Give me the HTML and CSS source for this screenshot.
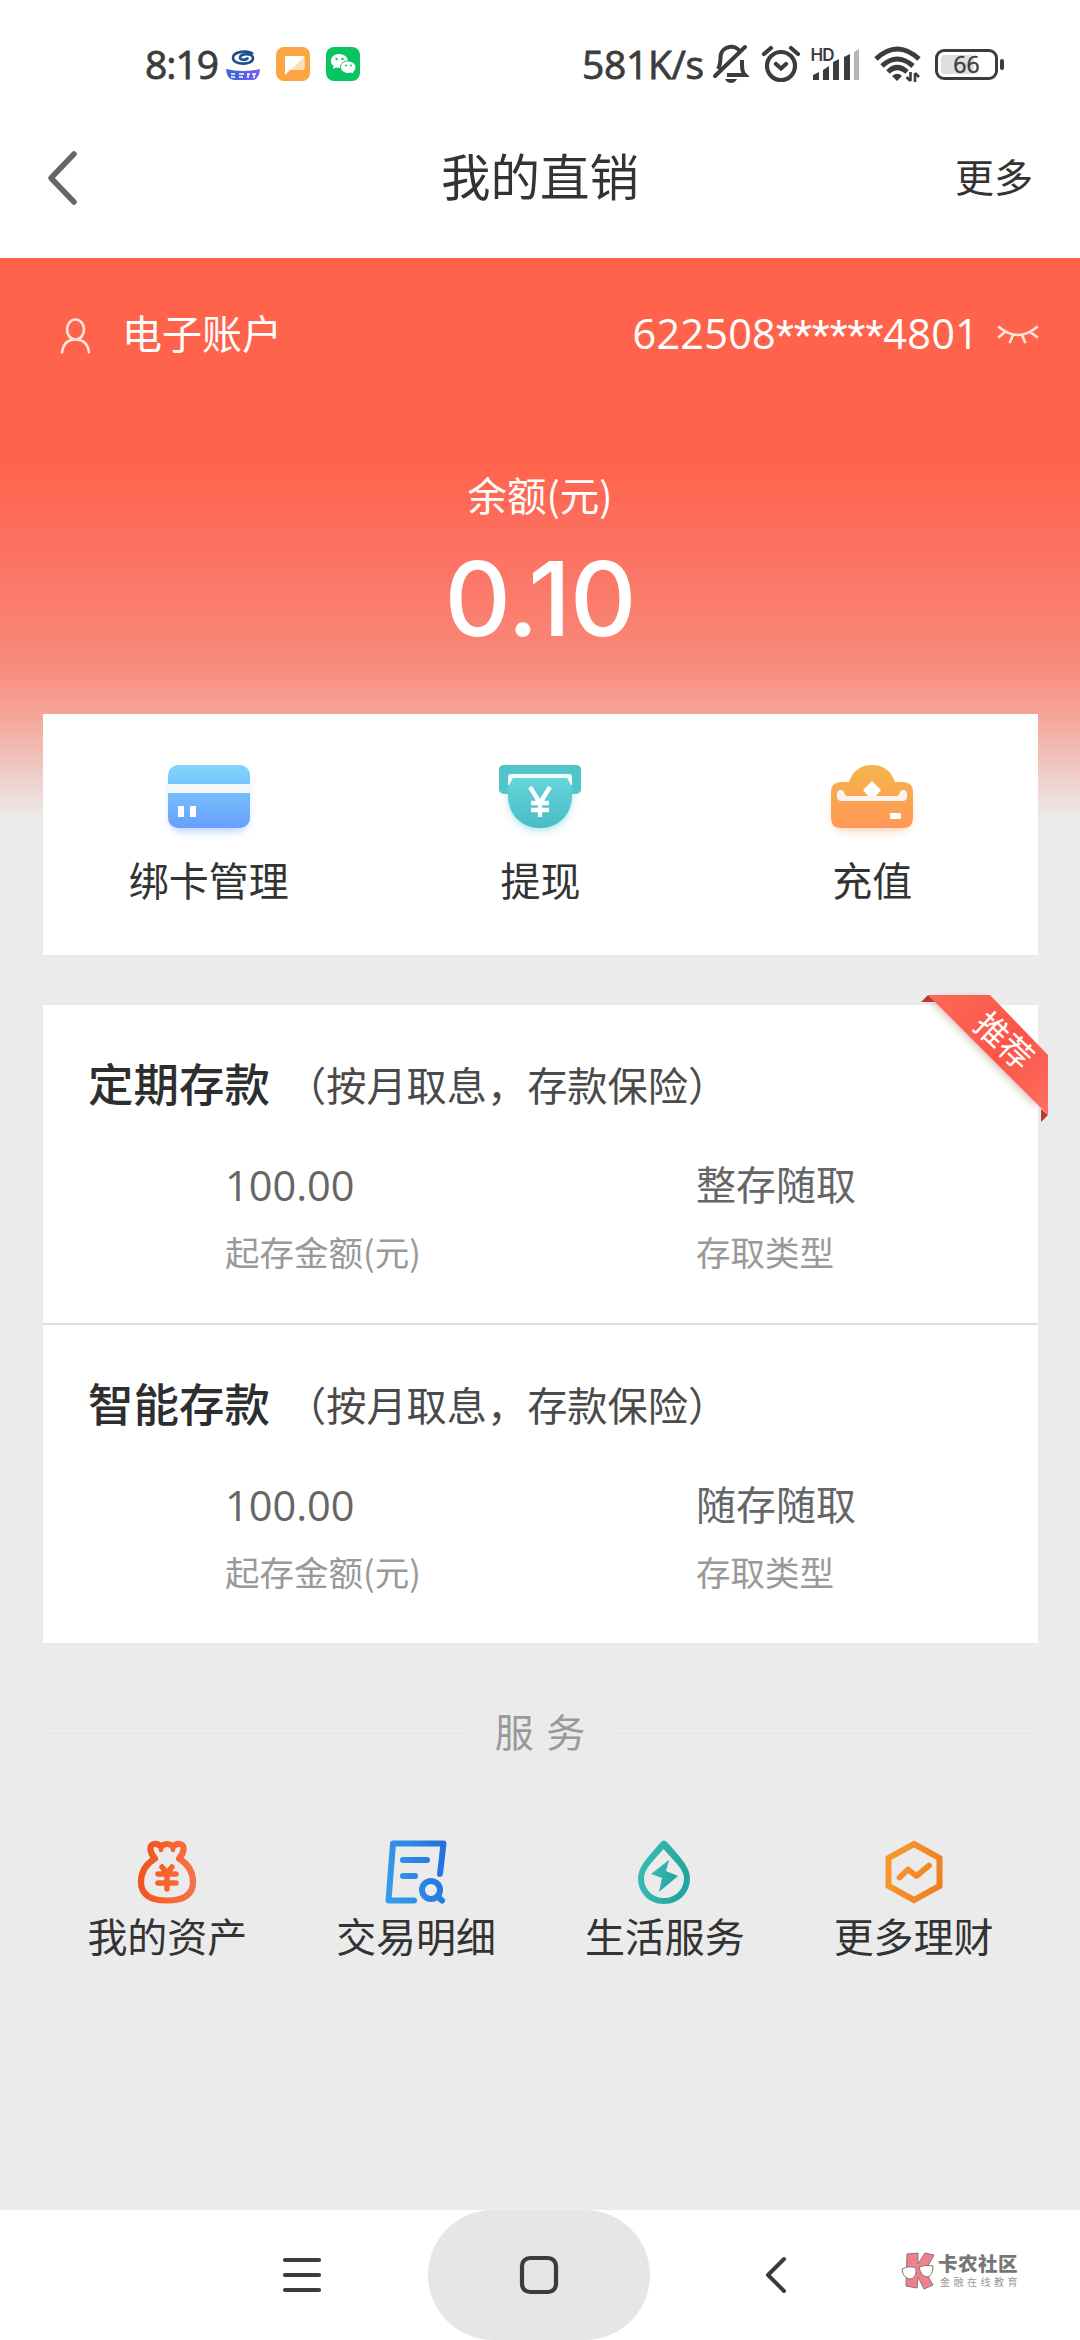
FILE: index.html
```html
<!DOCTYPE html>
<html lang="zh-CN">
<head>
<meta charset="utf-8">
<title>我的直销</title>
<link rel="stylesheet" href="styles.css">
</head>
<body>
<div class="statusbar">
  <span class="clock">8:19</span>
  <svg class="app-bank" width="34" height="34" viewBox="0 0 34 34">
    <defs><linearGradient id="gb"><stop offset="0" stop-color="#3568d8"/><stop offset="1" stop-color="#7a5cf0"/></linearGradient></defs>
    <path d="M27 7C22 3 7 4 7 11c0 7 20 8 20 0 0-5-13-5-13-.5 0 3 7 3 8 0" fill="none" stroke="#1d4f90" stroke-width="2.6"/>
    <path d="M0 22q17 4 34 0-1 11-8 11H8Q1 33 0 22Z" fill="url(#gb)"/>
    <path d="M5 27h4m-4 3h4M13 27h5m-5 3h4M21 27h3m-2 0v4M26 27h4m-2 0v4" stroke="#fff" stroke-width="1.5"/>
  </svg>
  <svg class="app-note" width="34" height="34" viewBox="0 0 34 34">
    <rect width="34" height="34" rx="8" fill="#fba642"/>
    <path d="M10 9h17a1.500 1.500 0 0 1 1.500 1.500V21a2 2 0 0 1-2 2H14l-5 5V10Z" fill="#fff"/>
    <path d="M28 10 15 23h12a1.500 1.500 0 0 0 1.500-1.500Z" fill="#fde0b8"/>
  </svg>
  <svg class="app-wechat" width="34" height="34" viewBox="0 0 34 34">
    <rect width="34" height="34" rx="8" fill="#0ac45f"/>
    <path d="M13 7c5 0 9 3 9 7s-4 7-9 7l-3-.5L7 22l.7-3C5.500 18 5 16 5 14c0-4 3-7 8-7Z" fill="#fff"/>
    <path d="M22 14c4 0 8 3 8 6 0 2-1 4-2.500 5l.5 2-3-1-3 .5c-4 0-7.500-3-7.500-6.500s3.500-6 7.500-6Z" fill="#fff" stroke="#0ac45f"/>
    <g fill="#0ac45f"><circle cx="10.500" cy="12" r="1.200"/><circle cx="16.500" cy="12" r="1.200"/><circle cx="20" cy="18.500" r="1"/><circle cx="25" cy="18.500" r="1"/></g>
  </svg>
  <span class="speed">581K/s</span>
  <svg class="bell" width="36" height="40" viewBox="0 0 36 40" fill="none" stroke="#3c3c3c" stroke-width="4">
    <path d="M5 25c2.500-4 2.500-8 2.500-12C8 1 24 0 27 8M14 31h18c-3-3-3-6-3-15"/>
    <path d="M2 32 32 3" stroke-linecap="round"/><path d="M12 35h12q-2 4-6 4t-6-4Z" fill="#3c3c3c" stroke="none"/>
  </svg>
  <svg class="alarm" width="40" height="38" viewBox="0 0 40 38" fill="none" stroke="#3c3c3c" stroke-width="4.200" stroke-linecap="round">
    <circle cx="20" cy="21" r="14"/><path d="m3 9 7-6M37 9l-7-6M15 19l5 4.500 5-4.500"/>
  </svg>
  <svg class="signal" width="50" height="36" viewBox="0 0 50 36" fill="#3c3c3c">
    <text class="hd" x="-.5" y="14.500" textLength="24">HD</text>
    <path d="M2 34v-5l6-3v8ZM12 34V24l6-4v14ZM22 34V16l6-3v21ZM33 34V11l6-3v26Z"/><path d="M43 34V6l5-3v31Z" fill="#b4b4b4"/>
  </svg>
  <svg class="wifi" width="48" height="38" viewBox="0 0 48 38" fill="none" stroke="#3c3c3c" stroke-width="5">
    <path d="M2 14Q23-6 45 14M8 21q15-14 31 0M14 27q9-9 19 0"/>
    <path d="m18 31q5.500-4.500 10 0l-5 5Z" fill="#3c3c3c" stroke="none"/>
    <path d="M36.500 27v9m-4-4 4 4M41 37v-9m4 4-4-4" stroke-width="2.600"/>
  </svg>
  <div class="battery"><span class="level"></span><span class="pct">66</span></div>
  <span class="battery-cap"></span>
</div>

<header class="topbar">
  <svg class="back" width="30" height="54" viewBox="0 0 30 54"><path d="M27 3 4 27l23 24" fill="none" stroke="#666" stroke-width="5.500" stroke-linecap="round" stroke-linejoin="round"/></svg>
  <h1 class="title">我的直销</h1>
  <a class="more">更多</a>
</header>

<main class="page">
  <section class="hero">
    <div class="account">
      <svg class="user" width="32" height="36" viewBox="0 0 32 36" fill="none" stroke="#ffe3dd" stroke-width="2.600" stroke-linecap="round">
        <ellipse cx="15.500" cy="11.500" rx="8.500" ry="10"/><path d="M2 34.500C3 26 8 21.500 15.500 21.500S28 26 29 34.500"/>
      </svg>
      <span class="account-name">电子账户</span>
      <span class="account-no">622508<span class="stars">******</span>4801</span>
      <svg class="eye" width="42" height="20" viewBox="0 0 42 20" fill="none" stroke="#ffe3dd" stroke-width="2.600" stroke-linecap="round">
        <path d="M2 3q19 16 38 0M8 8l-6 5M16 11l-3 7M25 11l3 7M33 8l7 5"/>
      </svg>
    </div>
    <p class="balance-label">余额(元)</p>
    <p class="balance">0.10</p>
  </section>

  <section class="card actions">
    <div class="action">
      <svg class="action-icon" width="98" height="82" viewBox="0 0 98 82">
        <defs>
          <linearGradient id="g1" x2="0" y2="1"><stop offset="0" stop-color="#7fd6fb"/><stop offset="1" stop-color="#689ffc"/></linearGradient>
          <filter id="sh" x="-20%" y="-20%" width="140%" height="150%"><feGaussianBlur stdDeviation="4"/></filter>
        </defs>
        <rect x="11" y="20" width="76" height="54" rx="10" fill="#689ffc" opacity=".5" filter="url(#sh)"/>
        <rect x="8" y="8" width="82" height="63" rx="10" fill="url(#g1)"/>
        <path d="M8 27h82v9H8Z" fill="#f6f7fa"/><path d="M18 49h6v11h-6ZM30 49h6v11h-6Z" fill="#fff"/>
      </svg>
      <span class="action-name">绑卡管理</span>
    </div>
    <div class="action">
      <svg class="action-icon" width="98" height="82" viewBox="0 0 98 82">
        <defs><linearGradient id="g2" x2="0" y2="1"><stop offset="0" stop-color="#66d5dc"/><stop offset="1" stop-color="#49bcc3"/></linearGradient></defs>
        <path d="M17 30h64q0 43-32 43T17 30Z" fill="#49bcc3" opacity=".5" filter="url(#sh)"/>
        <path d="M13 8h72q5 0 5 5v19q0 5-6 5H14q-6 0-6-5V13q0-5 5-5Z" fill="#51c5c9"/>
        <path d="M20 17h58q3 0 3 3v8H17v-8q0-3 3-3Z" fill="#f2f8f8"/>
        <path d="M22 21h54l5 9v9c0 19-14 32-32 32S17 58 17 39v-9Z" fill="url(#g2)"/>
        <path d="m39 30 10 16 10-16M49 45v15M40 46h18M40 53h18" fill="none" stroke="#fff" stroke-width="4.400"/>
      </svg>
      <span class="action-name">提现</span>
    </div>
    <div class="action">
      <svg class="action-icon" width="98" height="82" viewBox="0 0 98 82">
        <defs><linearGradient id="g3" gradientUnits="userSpaceOnUse" x1="0" y1="8" x2="0" y2="71"><stop offset="0" stop-color="#f8b44c"/><stop offset="1" stop-color="#ff9858"/></linearGradient></defs>
        <rect x="11" y="34" width="76" height="40" rx="10" fill="#ff9858" opacity=".45" filter="url(#sh)"/>
        <path d="M18 25h8C30 14 37 8 49 8s19 6 23 17h8q10 0 10 10v26q0 10-10 10H18Q8 71 8 61V35q0-10 10-10Z" fill="url(#g3)"/>
        <path d="M18 33q-4 0-4 4v3q0 4 5 4h60q5 0 5-4v-3q0-4-4-4-3 0-4 5H22q-1-5-4-5Z" fill="#f7f4f2"/>
        <path d="M24 32h50q2 4 1 7H23q-1-3 1-7Z" fill="url(#g3)"/>
        <path d="m49 24 9 9-5 6h-8l-5-6ZM67 56h11v6H67Z" fill="#fff"/>
      </svg>
      <span class="action-name">充值</span>
    </div>
  </section>

  <section class="card products">
    <article class="product">
      <h2 class="product-head"><b class="product-name">定期存款</b><span class="product-note">（按月取息，存款保险）</span></h2>
      <div class="facts">
        <div class="fact fact-amount"><span class="value num">100.00</span><span class="key">起存金额(元)</span></div>
        <div class="fact"><span class="value">整存随取</span><span class="key">存取类型</span></div>
      </div>
    </article>
    <article class="product">
      <h2 class="product-head"><b class="product-name">智能存款</b><span class="product-note">（按月取息，存款保险）</span></h2>
      <div class="facts">
        <div class="fact fact-amount"><span class="value num">100.00</span><span class="key">起存金额(元)</span></div>
        <div class="fact"><span class="value">随存随取</span><span class="key">存取类型</span></div>
      </div>
    </article>
    <svg class="ribbon" width="150" height="150" viewBox="0 0 150 150">
      <defs><linearGradient id="gr" x2="1" y2="1"><stop offset="0" stop-color="#fb6957"/><stop offset=".55" stop-color="#fb5548"/><stop offset="1" stop-color="#ff6f5f"/></linearGradient></defs>
      <path d="m20 20 108 108V75L70 18Z" fill="#7d1c18" opacity=".3" filter="url(#sh)"/>
      <path d="m11 22 7-7 8 7ZM131 129v13l7-7Z" fill="#b83a31"/>
      <path d="M18 15h62l58 60v60Z" fill="url(#gr)"/>
      <text class="ribbon-text" x="94" y="61" transform="rotate(43 94 61)" dy="12" text-anchor="middle">推荐</text>
    </svg>
  </section>

  <div class="divider"><span class="rule"></span><span class="divider-text">服 务</span><span class="rule"></span></div>

  <section class="services">
    <div class="service">
      <svg width="64" height="64" viewBox="0 0 64 64" fill="none" stroke="url(#s1)" stroke-width="6.200" stroke-linejoin="round" stroke-linecap="round">
        <defs><linearGradient id="s1" gradientUnits="userSpaceOnUse" x1="3" y1="30" x2="60" y2="36"><stop offset="0" stop-color="#ea5420"/><stop offset=".5" stop-color="#f8642c"/><stop offset="1" stop-color="#f4714c"/></linearGradient></defs>
        <path d="M20 18.500C14 12 14 4.500 19 4q4-.5 7 2.500Q29 4 32 4t6 2.500Q41 3.500 45 4c5 .5 5 8-1 14.500 10 6 14 15 14 23.500 0 12-8 18.500-26 18.500S6 54 6 42c0-8.500 4-17.500 14-23.500Z"/>
        <path d="M26 6v4M38 6v4" stroke-width="4.500"/>
        <path d="m27 27 5 6 5-6M32 33v16M23 34h18M23 43h18" stroke-width="5.500"/>
      </svg>
      <span class="service-name">我的资产</span>
    </div>
    <div class="service">
      <svg width="64" height="64" viewBox="0 0 64 64" fill="none" stroke="url(#s2)" stroke-width="6" stroke-linecap="round" stroke-linejoin="round">
        <defs><linearGradient id="s2" gradientUnits="userSpaceOnUse" x1="3" y1="40" x2="62" y2="25"><stop offset="0" stop-color="#369bea"/><stop offset="1" stop-color="#2273df"/></linearGradient></defs>
        <path d="M30 60.500H4.500L9 3.500h50.500L56 34M19 20h24M19 36h12"/><circle cx="47" cy="50" r="9"/><path d="m54 57 4 3.500"/>
      </svg>
      <span class="service-name">交易明细</span>
    </div>
    <div class="service">
      <svg width="64" height="64" viewBox="0 0 64 64">
        <defs><linearGradient id="s3" x2="1" y2=".25"><stop offset="0" stop-color="#3abfb8"/><stop offset="1" stop-color="#22a59e"/></linearGradient></defs>
        <path fill="url(#s3)" fill-rule="evenodd" d="M28 2q3-3 6 0c11 13 23 24 23 36 0 15-11 26-26 26S5 53 5 38C5 26 17 15 28 2Zm2.500 7C21 20 11 29 11 38c0 12 9 20 20 20s20-8 20-20c0-9-11-18-20.500-29Z"/>
        <path fill="url(#s3)" d="M36 20 18 34l11 4-3 14 19-16-12-5Z"/>
      </svg>
      <span class="service-name">生活服务</span>
    </div>
    <div class="service">
      <svg width="64" height="64" viewBox="0 0 64 64" fill="none" stroke="url(#s4)" stroke-width="6">
        <defs><linearGradient id="s4" gradientUnits="userSpaceOnUse" x1="3" y1="20" x2="60" y2="45"><stop offset="0" stop-color="#f79a30"/><stop offset="1" stop-color="#f07e20"/></linearGradient></defs>
        <path d="M32 4 57.500 18v28L32 60 6.500 46V18Z"/><path d="m17.500 37.500 8.500-8 8.500 6.500L47 25.500" stroke-width="5.800" stroke-linecap="round" stroke-linejoin="round"/>
      </svg>
      <span class="service-name">更多理财</span>
    </div>
  </section>
</main>

<nav class="navbar">
  <div class="nav-key"><svg width="38" height="38" viewBox="0 0 38 38"><path d="M2 4h34M2 19h34M2 34h34" stroke="#3c3c3c" stroke-width="4.200" stroke-linecap="round"/></svg></div>
  <div class="nav-key nav-home"><svg width="40" height="40" viewBox="0 0 40 40"><rect x="3" y="3" width="34" height="34" rx="8" fill="none" stroke="#3c3c3c" stroke-width="4.200"/></svg></div>
  <div class="nav-key"><svg width="22" height="38" viewBox="0 0 22 38"><path d="M19 3 3 19l16 16" fill="none" stroke="#3c3c3c" stroke-width="4" stroke-linecap="round" stroke-linejoin="round"/></svg></div>
  <div class="mark">
    <svg width="36" height="38" viewBox="0 0 36 38" stroke="#857476" stroke-width="1">
      <path d="M7 2 18 1v11l7-11 9 2-9 16 8 14-9 4-6-12-1 11-11-2Z" fill="#f27f8c"/>
      <path d="M2 17q7-4 14-1 1 9-5 11-8 0-9-10ZM19 15q7-3 14-1 0 9-5 11-7 0-9-10Z" fill="#fff"/>
    </svg>
    <div class="mark-text"><span class="mark-name">卡农社区</span><span class="mark-sub">金融在线教育</span></div>
  </div>
</nav>
</body>
</html>
```

FILE: styles.css
```css
* { box-sizing: border-box; }
body {
  margin: 0;
  width: 1080px;
  height: 2340px;
  display: flex;
  flex-direction: column;
  overflow: hidden;
  background: #fff;
  color: #333;
  font-family: "Noto Sans CJK SC", sans-serif;
  font-size: 40px;
  line-height: 48px;
}
h1, h2, p { margin: 0; font-weight: 400; }
svg { display: block; flex: none; overflow: visible; }

.statusbar {
  height: 128px;
  padding-left: 145px;
  display: flex;
  align-items: center;
  color: #3c3c3c;
  font-family: "Open Sans", "Noto Sans", sans-serif;
  font-size: 39px;
  -webkit-text-stroke: .8px #3c3c3c;
  white-space: nowrap;
}
.clock { width: 81px; letter-spacing: -1px; }
.app-note { margin-left: 16px; }
.app-wechat { margin-left: 16px; }
.speed { width: 128px; margin-left: 222px; letter-spacing: -.3px; }
.bell { margin-left: 3px; }
.alarm { margin-left: 12px; }
.signal { margin-left: 10px; }
.wifi { margin-left: 13px; }
.hd { font-family: Inter, sans-serif; font-size: 17px; font-weight: 600; -webkit-text-stroke: 0; }
.battery {
  position: relative;
  width: 63px;
  height: 31px;
  margin-left: 13px;
  border: 3.5px solid #3c3c3c;
  border-radius: 9px;
  display: flex;
  align-items: center;
  justify-content: center;
}
.level { position: absolute; left: 3px; top: 3px; bottom: 3px; width: 33px; border-radius: 3px; background: #dedede; }
.pct { position: relative; font-size: 23px; -webkit-text-stroke: .4px #3c3c3c; }
.battery-cap { width: 4px; height: 11px; margin-left: 2px; border-radius: 2px; background: #3c3c3c; }

.topbar {
  height: 130px;
  padding: 0 47px 30px 47px;
  display: grid;
  grid-template-columns: 1fr auto 1fr;
  align-items: center;
}
.title { padding-bottom: 6px; font-size: 49.5px; line-height: 60px; }
.more { justify-self: end; padding-bottom: 7px; font-size: 39px; }

.page {
  flex: 1;
  background: linear-gradient(#ff634c 0, #ff634c 200px, #fc7161 290px, #f98878 400px, #f5a79b 460px, #ebebeb 562px);
}
.hero { height: 456px; color: #fff; }
.account { display: flex; align-items: center; height: 152px; padding: 0 41px 0 60px; }
.user { margin-top: 4px; }
.account-name { margin-left: 30px; padding-bottom: 5px; }
.account-no { margin-left: auto; font-family: "Open Sans", sans-serif; font-size: 41.5px; letter-spacing: .2px; }
.stars { font-family: Roboto, sans-serif; letter-spacing: 0; }
.eye { margin-left: 18px; }
.balance-label { margin-top: 60px; text-align: center; font-size: 39.500px; }
.balance {
  margin-top: 21px;
  text-align: center;
  font-family: Inter, sans-serif;
  font-size: 103px;
  font-weight: 500;
  line-height: 120px;
  letter-spacing: -1px;
}

.card { position: relative; margin: 0 42px 0 43px; background: #fff; }
.actions { height: 241px; display: grid; grid-template-columns: repeat(3, 1fr); }
.action { display: flex; flex-direction: column; align-items: center; padding-top: 43px; }
.action-name { margin-top: 16px; }

.products { margin-top: 50px; }
.product { height: 318px; padding: 54px 45px 0; }
.product + .product { height: 320px; border-top: 2px solid #dedede; }
.product-head { display: flex; align-items: center; height: 50px; }
.product-name { padding-bottom: 4px; font-size: 45.5px; font-weight: 500; line-height: 50px; color: #2e2e2e; }
.product-note { margin-left: 16px; font-size: 40.200px; color: #4a4a4a; }
.facts { display: flex; padding: 50px 0 0 137px; }
.fact { display: flex; flex-direction: column; }
.fact-amount { width: 471px; }
.value { color: #666; height: 48px; }
.num { font-family: "Open Sans", sans-serif; font-size: 41.5px; padding-top: 2px; }
.key { margin-top: 20px; font-size: 34.500px; color: #999; }
.ribbon { position: absolute; left: 867px; top: -25px; }
.ribbon-text { font-size: 33px; fill: #fff; }

.divider { display: flex; align-items: center; height: 48px; margin: 66px 41px 0 43px; }
.rule { flex: 1; height: 2px; background: #e7e7e7; }
.divider-text { width: 146px; padding-bottom: 6px; text-align: center; font-size: 39px; letter-spacing: 2px; color: #999; }

.services { display: grid; grid-template-columns: repeat(4, 1fr); margin: 83px 42px 0 43px; }
.service { display: flex; flex-direction: column; align-items: center; }
.service-name { margin-top: 7px; }

.navbar {
  height: 130px;
  position: relative;
  display: grid;
  grid-template-columns: repeat(3, 222px) 1fr;
  column-gap: 15px;
  padding-left: 191px;
  background: #fff;
}
.nav-key { display: flex; align-items: center; justify-content: center; }
.nav-home { background: #e6e6e6; border-radius: 65px; }
.mark { position: absolute; left: 900px; top: 42px; display: flex; }
.mark-text { display: flex; flex-direction: column; margin-left: 2px; white-space: nowrap; }
.mark-name { font-size: 19.500px; font-weight: 900; line-height: 21px; letter-spacing: .5px; color: #777; }
.mark-sub { margin: 2px 0 0 2px; font-size: 10px; line-height: 14px; letter-spacing: 3.500px; color: #999; }
```
